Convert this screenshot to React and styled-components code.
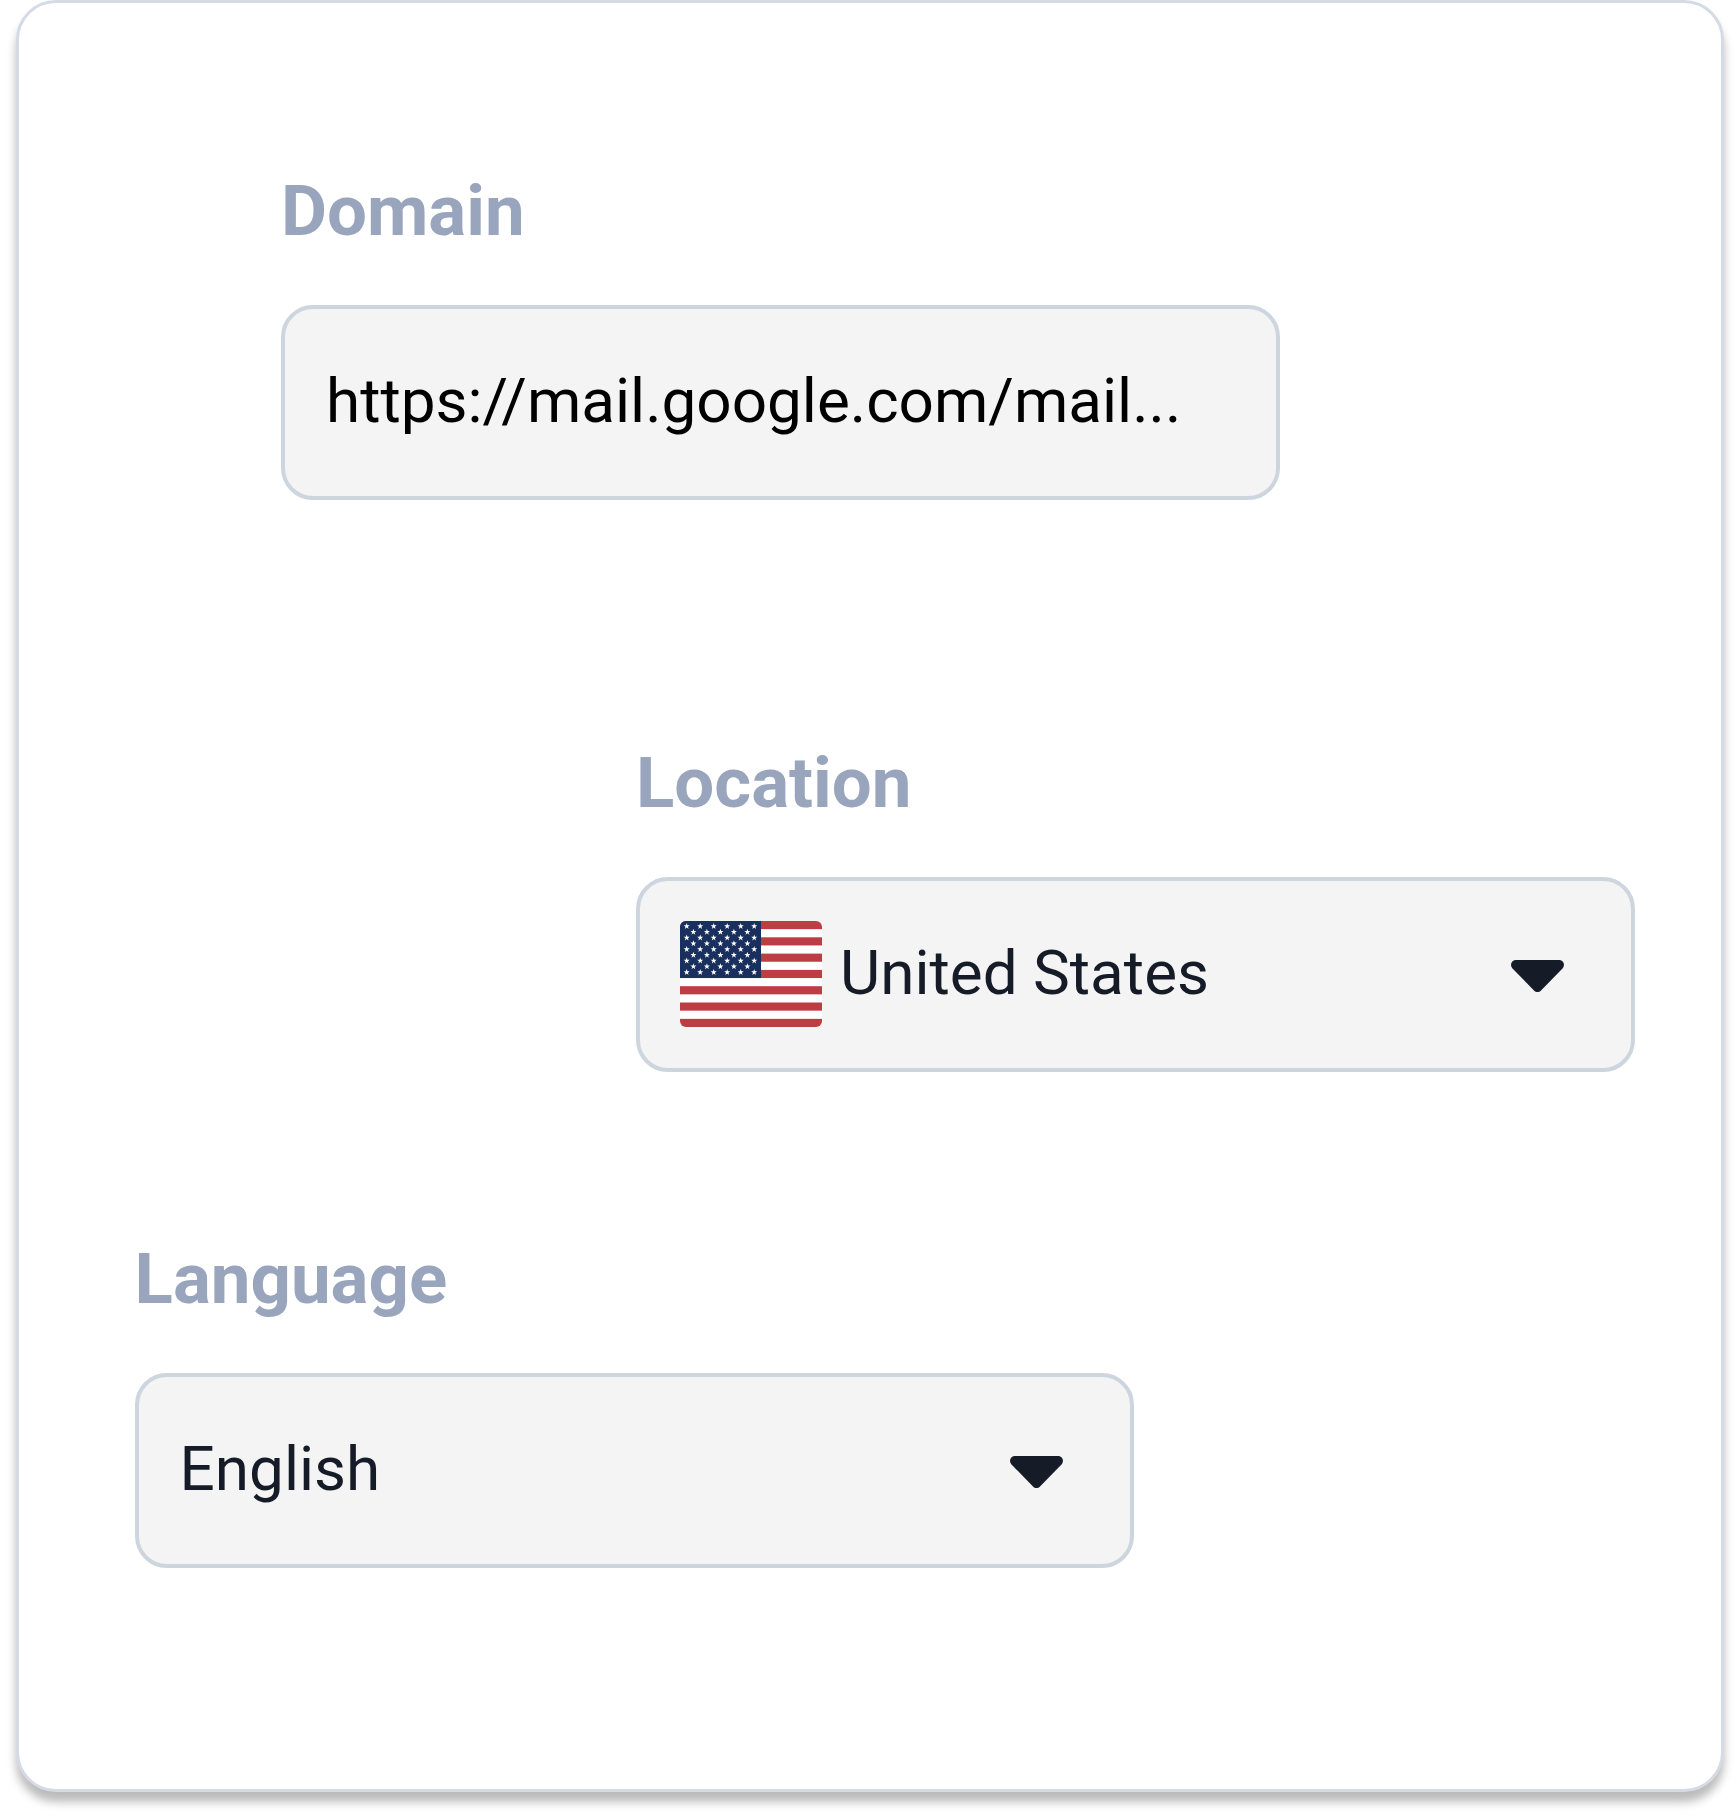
import React from 'react';
import styled, { createGlobalStyle } from 'styled-components';

const Global = createGlobalStyle`
  html, body { margin: 0; padding: 0; background: #fff; }
  body { font-family: Roboto, "Liberation Sans", sans-serif; }
`;
const Page = styled.div`
  width: 1736px; height: 1819px; padding: 0 12px 0 16px; box-sizing: border-box;
`;
const Card = styled.div`
  width: 1708px; height: 1792px; box-sizing: border-box; border: 3.4px solid #d5dbe5; border-radius: 40px;
  background: #fff; box-shadow: 0 10px 10px rgba(0,0,0,.27);
  display: flex; flex-direction: column; padding-top: 170px;
`;
const Field = styled.div`
  width: 999px; margin-left: ${p => p.$left}px; margin-bottom: ${p => p.$after}px;
`;
const Label = styled.div`
  font-size: 70.8px; line-height: 76px; font-weight: 700; color: #98a5bd; margin-bottom: 55.5px;
`;
const Box = styled.div`
  height: 195px; box-sizing: border-box; background: #f4f4f4; border: 4px solid #cdd5df; border-radius: 32px;
  display: flex; align-items: center; padding: 0 67px 4px 41px; font-size: 62px; color: ${p => p.$dark ? '#151c28' : '#000'};
`;
const Value = styled.span` flex: 1; `;
const CaretIcon = styled.svg` flex: none; margin-top: 8.5px; `;
const Caret = () => (
  <CaretIcon width="53" height="32" viewBox="0 0 53 32">
    <path d="M5 0H48C52.5 0 54.5 5 51.5 8.5L30 30.5C28 32.5 25 32.5 23 30.5L1.5 8.5C-1.5 5 .5 0 5 0Z" fill="#151c28" />
  </CaretIcon>
);
const Flag = styled.svg` margin: 4px 18px 0 -1px; flex: none; border-radius: 6px; `;
const STAR = '0,-3.2 .75,-1 3,-1 1.2,.4 1.9,2.6 0,1.3 -1.9,2.6 -1.2,.4 -3,-1 -.75,-1';
const stars = [];
for (let r = 0; r < 9; r++) {
  for (let c = 0; c < (r % 2 ? 5 : 6); c++) {
    stars.push(
      <polygon key={r + '-' + c} points={STAR} fill="#fff"
        transform={`translate(${(r % 2 ? 13.4 : 6.7) + c * 13.5} ${5.3 + r * 5.75})`} />
    );
  }
}
const RED_STRIPES = [0, 16.3, 32.6, 48.9, 65.2, 81.5, 97.85];
const UsFlag = () => (
  <Flag width="142" height="106" viewBox="0 0 142 106">
    <rect width="142" height="106" fill="#fff" />
    {RED_STRIPES.map(y => <rect key={y} y={y} width="142" height="8.15" fill="#bd3d44" />)}
    <rect width="81" height="57" fill="#192f5d" />
    {stars}
  </Flag>
);
export default function App() {
  return (
    <Page>
      <Global />
      <Card>
        <Field $left={262} $after={245.6}>
          <Label>Domain</Label>
          <Box><Value>https://mail.google.com/mail...</Value></Box>
        </Field>
        <Field $left={617} $after={169.5}>
          <Label>Location</Label>
          <Box $dark><UsFlag /><Value>United States</Value><Caret /></Box>
        </Field>
        <Field $left={115.6} $after={0}>
          <Label>Language</Label>
          <Box $dark><Value>English</Value><Caret /></Box>
        </Field>
      </Card>
    </Page>
  );
}
